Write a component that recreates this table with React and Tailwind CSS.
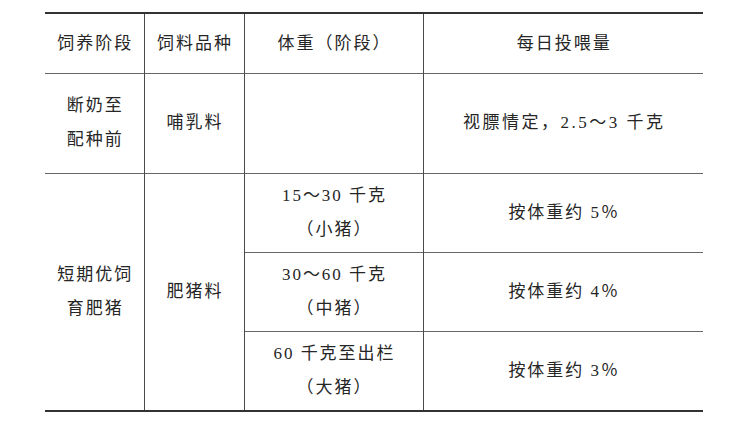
import React from "react";

const font = { fontFamily: '"Liberation Serif", "Noto Sans CJK SC", serif' };

function Cell({ children, className = "", ...rest }) {
  return (
    <td
      className={"p-0 text-center align-middle border-x border-[#4a4a4a] " + className}
      {...rest}
    >
      {children}
    </td>
  );
}

function Lines({ lines }) {
  return (
    <div className="flex flex-col items-center leading-[34px]">
      {lines.map((l, i) => (
        <div key={i} className="pl-[2px]">{l}</div>
      ))}
    </div>
  );
}

export default function App() {
  return (
    <div className="w-[734px] h-[439px] bg-white pt-[12px] pl-[45px]" style={font}>
      <table className="border-collapse text-[17px] text-[#262626] tracking-[2px] w-[658px] table-fixed">
        <colgroup>
          <col className="w-[99px]" />
          <col className="w-[100px]" />
          <col className="w-[179px]" />
          <col className="w-[280px]" />
        </colgroup>
        <tbody>
          <tr className="h-[60px] border-t-2 border-t-[#333] border-b border-b-[#666]">
            <Cell className="border-l-0 pl-[2px]">饲养阶段</Cell>
            <Cell className="pl-[2px]">饲料品种</Cell>
            <Cell className="pl-[2px]">体重（阶段）</Cell>
            <Cell className="border-r-0 pl-[2px]">每日投喂量</Cell>
          </tr>
          <tr className="h-[100px] border-b border-b-[#666]">
            <Cell className="border-l-0"><Lines lines={["断奶至", "配种前"]} /></Cell>
            <Cell className="pl-[2px]">哺乳料</Cell>
            <Cell></Cell>
            <Cell className="border-r-0 tracking-[2.5px] pl-[2px]">视膘情定，2.5～3 千克</Cell>
          </tr>
          <tr className="h-[79px] border-b border-b-[#666]">
            <Cell rowSpan={3} className="border-l-0"><Lines lines={["短期优饲", "育肥猪"]} /></Cell>
            <Cell rowSpan={3} className="pl-[2px]">肥猪料</Cell>
            <Cell><Lines lines={["15～30 千克", "（小猪）"]} /></Cell>
            <Cell className="border-r-0 pl-[2px]">按体重约 5％</Cell>
          </tr>
          <tr className="h-[79px] border-b border-b-[#666]">
            <Cell><Lines lines={["30～60 千克", "（中猪）"]} /></Cell>
            <Cell className="border-r-0 pl-[2px]">按体重约 4％</Cell>
          </tr>
          <tr className="h-[80px] border-b-2 border-b-[#333]">
            <Cell><Lines lines={["60 千克至出栏", "（大猪）"]} /></Cell>
            <Cell className="border-r-0 pl-[2px]">按体重约 3％</Cell>
          </tr>
        </tbody>
      </table>
    </div>
  );
}
